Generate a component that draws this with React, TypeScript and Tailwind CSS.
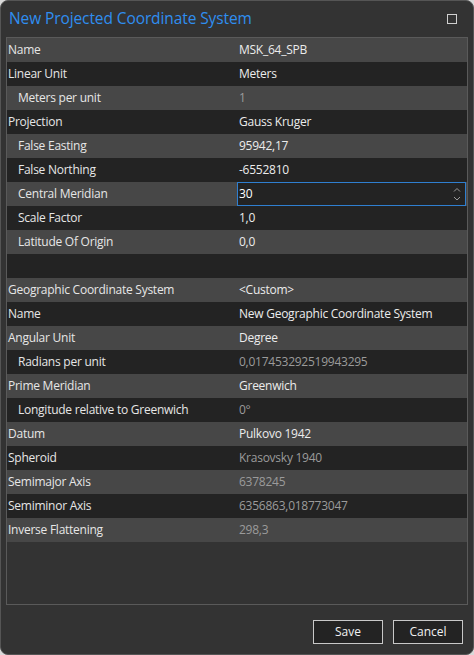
import React from "react";

type Row = { label: string; value?: string; indent?: boolean; dim?: boolean; input?: boolean; empty?: boolean };

const rows: Row[] = [
  { label: "Name", value: "MSK_64_SPB" },
  { label: "Linear Unit", value: "Meters" },
  { label: "Meters per unit", value: "1", indent: true, dim: true },
  { label: "Projection", value: "Gauss Kruger" },
  { label: "False Easting", value: "95942,17", indent: true },
  { label: "False Northing", value: "-6552810", indent: true },
  { label: "Central Meridian", value: "30", indent: true, input: true },
  { label: "Scale Factor", value: "1,0", indent: true },
  { label: "Latitude Of Origin", value: "0,0", indent: true },
  { label: "", empty: true },
  { label: "Geographic Coordinate System", value: "<Custom>" },
  { label: "Name", value: "New Geographic Coordinate System" },
  { label: "Angular Unit", value: "Degree" },
  { label: "Radians per unit", value: "0,017453292519943295", indent: true, dim: true },
  { label: "Prime Meridian", value: "Greenwich" },
  { label: "Longitude relative to Greenwich", value: "0°", indent: true, dim: true },
  { label: "Datum", value: "Pulkovo 1942" },
  { label: "Spheroid", value: "Krasovsky 1940", dim: true },
  { label: "Semimajor Axis", value: "6378245", dim: true },
  { label: "Semiminor Axis", value: "6356863,018773047", dim: true },
  { label: "Inverse Flattening", value: "298,3", dim: true },
];

export default function App() {
  return (
    <div className="w-[474px] h-[655px] bg-[#d9d9d9]" style={{ fontFamily: '"Open Sans", "Noto Sans", sans-serif' }}>
      <div className="w-[474px] h-[655px] bg-[#333333] rounded-[8px] border border-[#555] flex flex-col">
        <div className="h-[36px] flex items-center justify-between pl-[8px] pr-[16px] pb-[1px]">
          <span className="text-[#2f8ef0] text-[15.5px] tracking-[-0.1px]">New Projected Coordinate System</span>
          <div className="w-[10px] h-[10px] border-[1.5px] border-[#d0d0d0]" />
        </div>
        <div className="mx-[5px] h-[568px] border border-[#5a5a5a] flex flex-col">
          {rows.map((r, i) => (
            <div
              key={i}
              className={`h-[24px] shrink-0 flex items-center text-[12px] ${i % 2 === 0 ? "bg-[#474747]" : "bg-[#232323]"}`}
            >
              <div className={`w-[230px] shrink-0 text-[#e6e6e6] whitespace-nowrap tracking-[-0.25px] ${r.indent ? "pl-[11px]" : "pl-[1px]"}`}>
                {r.label}
              </div>
              {r.input ? (
                <div className="flex-1 h-[24px] mr-[1px] border border-[#2f7fd0] bg-[#232323] flex items-center justify-between pl-[1px] pr-[3px]">
                  <span className="text-white">{r.value}</span>
                  <svg width="10" height="18" viewBox="0 0 10 18" fill="none" stroke="#9a9a9a" strokeWidth="1">
                    <path d="M2 6.5 L5 3.5 L8 6.5" />
                    <path d="M2 12 L5 15 L8 12" />
                  </svg>
                </div>
              ) : (
                <div className={`flex-1 whitespace-nowrap tracking-[-0.25px] pl-[2px] ${r.dim ? "text-[#9b9b9b]" : "text-[#ececec]"}`}>
                  {r.value}
                </div>
              )}
            </div>
          ))}
        </div>
        <div className="flex justify-end gap-[10px] pr-[10px] pt-[15px]">
          <button className="w-[70px] h-[24px] border border-[#c8c8c8] bg-[#232323] text-[#f0f0f0] text-[12px]">Save</button>
          <button className="w-[70px] h-[24px] border border-[#c8c8c8] bg-[#232323] text-[#f0f0f0] text-[12px]">Cancel</button>
        </div>
      </div>
    </div>
  );
}
